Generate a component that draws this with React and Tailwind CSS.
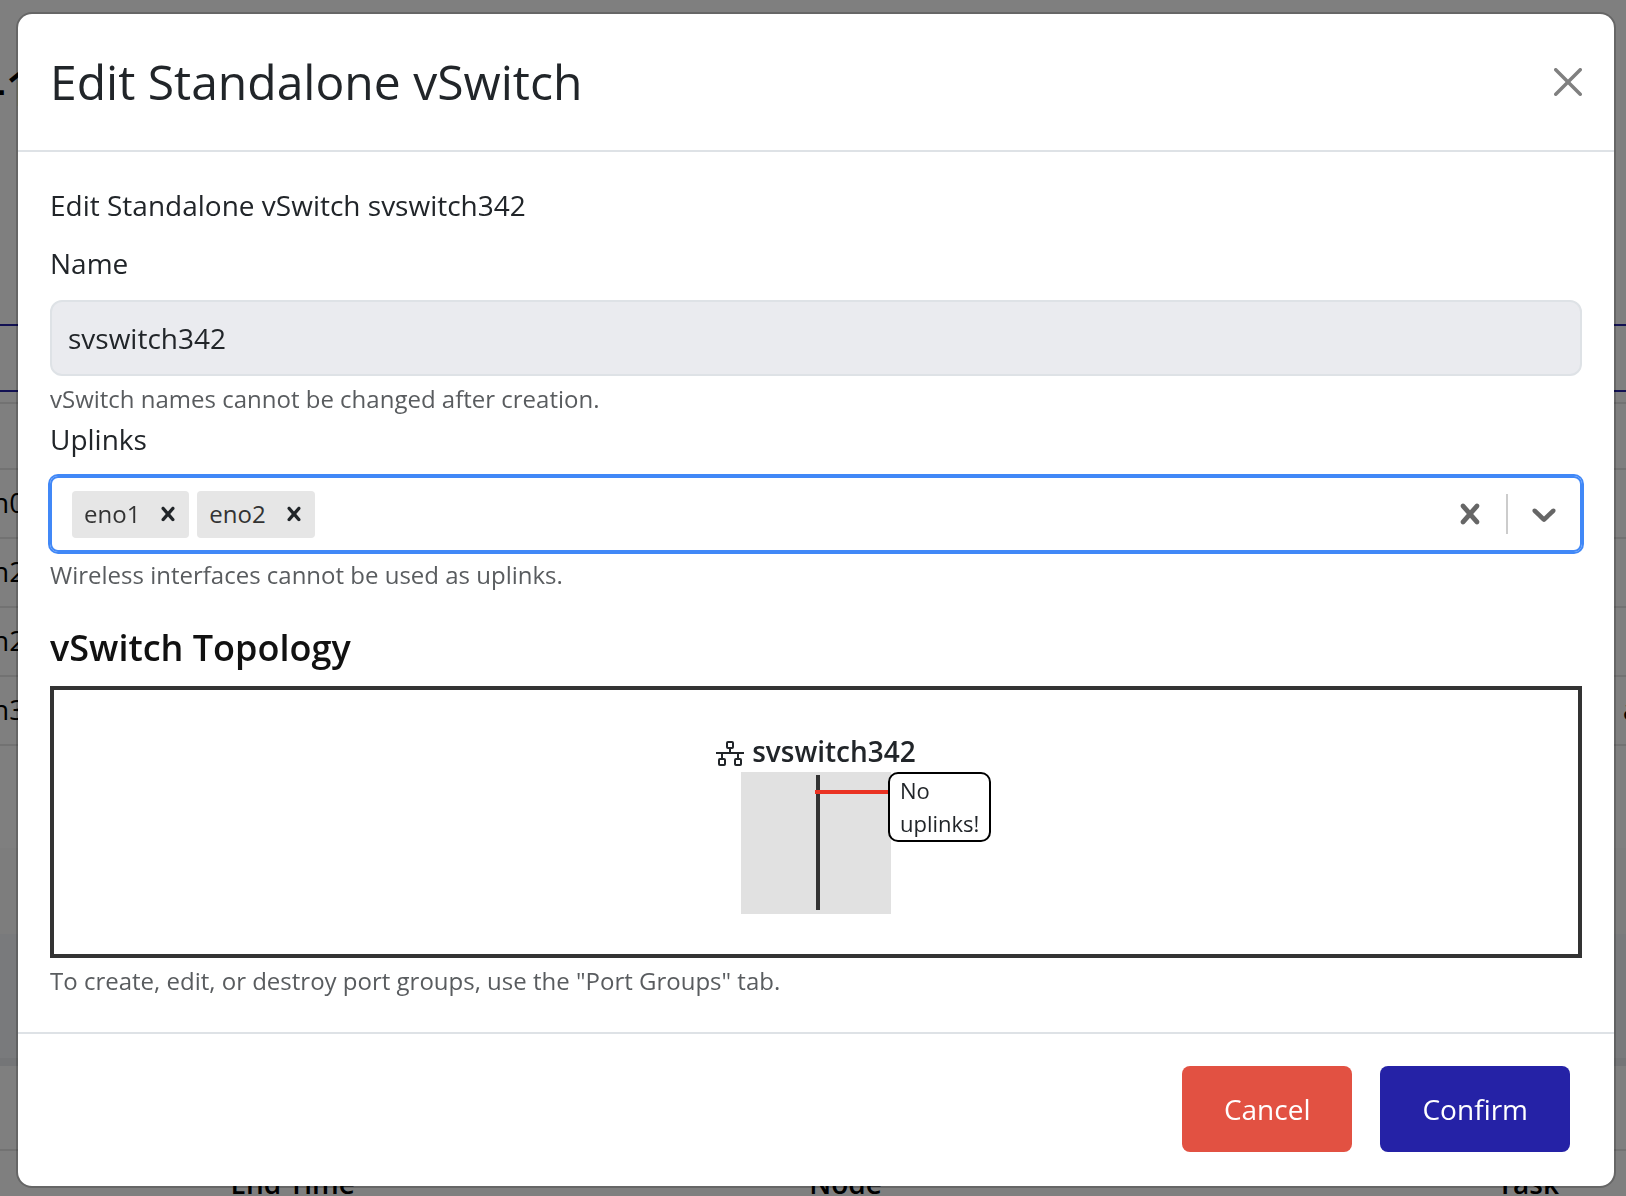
import React, { useState } from "react";

const CROSS =
  "M14.348 14.849c-0.469 0.469-1.229 0.469-1.697 0l-2.651-3.030-2.651 3.029c-0.469 0.469-1.229 0.469-1.697 0-0.469-0.469-0.469-1.229 0-1.697l2.758-3.15-2.759-3.152c-0.469-0.469-0.469-1.228 0-1.697s1.228-0.469 1.697 0l2.652 3.031 2.651-3.031c0.469-0.469 1.228-0.469 1.697 0s0.469 1.229 0 1.697l-2.758 3.152 2.758 3.15c0.469 0.469 0.469 1.229 0 1.698z";
const CHEVRON =
  "M4.516 7.548c0.436-0.446 1.043-0.481 1.576 0l3.908 3.747 3.908-3.747c0.533-0.481 1.141-0.446 1.574 0 0.436 0.445 0.408 1.197 0 1.615-0.406 0.418-4.695 4.502-4.695 4.502-0.217 0.223-0.502 0.335-0.787 0.335s-0.57-0.112-0.789-0.335c0 0-4.287-4.084-4.695-4.502s-0.436-1.17 0-1.615z";
const CLOSE =
  "M.293.293a1 1 0 0 1 1.414 0L8 6.586 14.293.293a1 1 0 1 1 1.414 1.414L9.414 8l6.293 6.293a1 1 0 0 1-1.414 1.414L8 9.414l-6.293 6.293a1 1 0 0 1-1.414-1.414L6.586 8 .293 1.707a1 1 0 0 1 0-1.414z";

function Glyph({ d, className, box = "0 0 20 20" }) {
  return (
    <svg viewBox={box} className={className} fill="currentColor" aria-hidden="true">
      <path d={d} />
    </svg>
  );
}

function NetworkIcon() {
  return (
    <svg viewBox="0 0 28 26" className="mt-1.5 h-[26px] w-7" fill="none" stroke="currentColor" strokeWidth="2" aria-hidden="true">
      <rect x="11" y="1" width="6" height="6" rx="1" />
      <rect x="3" y="18" width="6" height="6" rx="1" />
      <rect x="19" y="18" width="6" height="6" rx="1" />
      <path d="M14 7v5M0 12h28M6 12v6M22 12v6" />
    </svg>
  );
}

const INTERFACES = [
  ["n0", ""],
  ["n2", ""],
  ["n2", ""],
  ["n3", "a"],
];

function Backdrop() {
  return (
    <div aria-hidden="true" className="flex h-screen flex-col overflow-hidden bg-white text-[28px] leading-[42px] text-black">
      <div className="h-[324px] shrink-0">
        <div className="-ml-[10px] pt-[52px] text-5xl leading-[72px] font-semibold">-1</div>
      </div>
      <div className="h-[68px] shrink-0 border-y-2 border-[#2522a6]" />
      <table className="mt-[10px] w-full shrink-0 border-collapse">
        <tbody>
          <tr className="h-[66px] border-y-2 border-[#e5e5e5]">
            <td />
            <td />
          </tr>
          {INTERFACES.map(([name, extra], i) => (
            <tr key={i} className="h-[69px] border-b-2 border-[#e5e5e5]">
              <td className="pb-1">
                <div className="-ml-2">{name}</div>
              </td>
              <td className="w-[3px] pb-1">
                <div className="w-[3px] overflow-hidden font-semibold">{extra}</div>
              </td>
            </tr>
          ))}
        </tbody>
      </table>
      <div className="h-[102px] shrink-0" />
      <div className="h-[86px] shrink-0 bg-[#fafafa]" />
      <div className="h-[132px] shrink-0 border-b-8 border-[#e9ebee] bg-[#f2f4f8]" />
      <div className="h-[85px] shrink-0 border-b-2 border-[#e5e5e5]" />
      <table className="w-full table-fixed border-collapse">
        <thead>
          <tr>
            <th className="w-[36%] pt-[11px] text-center font-semibold">End Time</th>
            <th className="w-[32%] pt-[11px] text-center font-semibold">Node</th>
            <th className="pt-[11px] pr-[67px] text-right font-semibold">Task</th>
          </tr>
        </thead>
      </table>
    </div>
  );
}

function Chip({ label, onRemove }) {
  return (
    <div className="flex h-[47px] items-center rounded-sm bg-[#e6e6e6]">
      <span className="pr-[7px] pl-3 text-2xl text-[#333333]">{label}</span>
      <button type="button" aria-label={`Remove ${label}`} onClick={onRemove} className="flex h-full items-center px-[7px] text-[#212529]">
        <Glyph d={CROSS} className="size-7" />
      </button>
    </div>
  );
}

function Topology({ name }) {
  return (
    <div className="flex h-[272px] flex-col items-center border-4 border-[#333333] pt-10">
      <div className="flex items-center gap-2">
        <NetworkIcon />
        <span className="font-semibold">{name}</span>
      </div>
      <div className="relative flex h-[142px] w-[150px] justify-center bg-[#e1e1e1] pt-[3px] pb-1">
        <div className="ml-1 w-1 bg-[#333333]" />
        <div className="absolute top-[18px] left-[74px] h-1 w-[74px] bg-[#ea3323]" />
        <div className="absolute top-0 left-[147px] w-[103px] rounded-[10px] border-2 border-black bg-white px-[10px] text-[22px] leading-[33px]">
          No uplinks!
        </div>
      </div>
    </div>
  );
}

export default function App() {
  const [uplinks, setUplinks] = useState(["eno1", "eno2"]);
  return (
    <div className="font-['Open_Sans','Noto_Sans',sans-serif]">
      <Backdrop />
      <div className="fixed inset-0 overflow-hidden bg-black/50 pt-3 pr-[10px] pl-4">
        <div
          role="dialog"
          aria-modal="true"
          aria-labelledby="dialog-title"
          className="flex w-full max-w-[1600px] flex-col rounded-2xl border-2 border-black/20 bg-white bg-clip-padding text-[28px] leading-[42px] text-[#212529]"
        >
          <header className="flex items-center justify-between border-b-2 border-[#dee2e6] p-8">
            <h1 id="dialog-title" className="text-5xl leading-[72px]">
              Edit Standalone vSwitch
            </h1>
            <button type="button" aria-label="Close" className="text-[#808080]">
              <Glyph d={CLOSE} box="0 0 16 16" className="size-7" />
            </button>
          </header>

          <div className="flex flex-col p-8">
            <p className="mb-4">Edit Standalone vSwitch svswitch342</p>
            <label htmlFor="name" className="mb-4">
              Name
            </label>
            <input
              id="name"
              type="text"
              disabled
              defaultValue="svswitch342"
              className="h-[76px] w-full rounded-xl border-2 border-[#dee2e6] bg-[#eaebef] px-4 text-[#212529]"
            />
            <p className="mt-1 text-2xl leading-[38px] text-[#595c5f]">vSwitch names cannot be changed after creation.</p>
            <label htmlFor="uplinks" className="mb-4">
              Uplinks
            </label>
            <div className="flex h-[76px] items-center rounded-lg border-2 border-[#4188f7] pl-5 ring-2 ring-[#4188f7]">
              <div className="flex flex-1 items-center gap-2">
                {uplinks.map((u) => (
                  <Chip key={u} label={u} onRemove={() => setUplinks(uplinks.filter((x) => x !== u))} />
                ))}
                <input id="uplinks" type="text" role="combobox" aria-expanded="false" aria-controls="uplinks" className="min-w-0 flex-1 outline-none" />
              </div>
              <button type="button" aria-label="Clear all" onClick={() => setUplinks([])} className="px-4 text-[#666666]">
                <Glyph d={CROSS} className="size-10" />
              </button>
              <span className="h-10 w-0.5 bg-[#cccccc]" />
              <button type="button" aria-label="Show options" className="px-4 text-[#666666]">
                <Glyph d={CHEVRON} className="size-10" />
              </button>
            </div>
            <p className="mt-1 text-2xl leading-[38px] text-[#595c5f]">Wireless interfaces cannot be used as uplinks.</p>

            <h2 className="mt-8 mb-4 text-4xl leading-[44px] font-semibold text-[#111111]">vSwitch Topology</h2>
            <Topology name="svswitch342" />
            <p className="mt-1 text-2xl leading-[38px] text-[#595c5f]">
              To create, edit, or destroy port groups, use the "Port Groups" tab.
            </p>
          </div>

          <footer className="flex justify-end gap-7 border-t-2 border-[#dee2e6] pt-8 pr-11 pb-[34px] pl-8">
            <button type="button" className="h-[86px] rounded-lg bg-[#e25142] px-[42px] text-white">
              Cancel
            </button>
            <button type="button" className="h-[86px] rounded-lg bg-[#2522a6] px-[42px] text-white">
              Confirm
            </button>
          </footer>
        </div>
      </div>
    </div>
  );
}
